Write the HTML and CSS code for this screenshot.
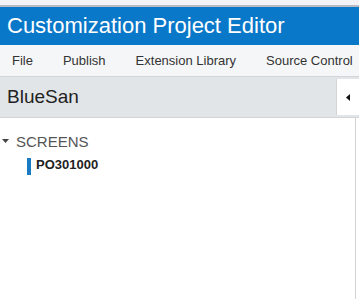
FILE: index.html
```html
<!DOCTYPE html>
<html lang="en">
<head>
    <meta charset="UTF-8">
    <meta name="viewport" content="width=device-width, initial-scale=1.0">
    <title>Customization Project Editor</title>
    <link rel="stylesheet" href="styles.css">
</head>
<body>
    <div class="topstrip"></div>

    <header class="header">
        <h1>Customization Project Editor</h1>
    </header>

    <nav class="menu">
        <a href="#" class="menu-item">File</a>
        <a href="#" class="menu-item">Publish</a>
        <a href="#" class="menu-item">Extension Library</a>
        <a href="#" class="menu-item">Source Control</a>
    </nav>

    <div class="project-bar">
        <span class="project-name">BlueSan</span>
        <button class="collapse-btn" aria-label="Collapse">
            <svg width="4" height="7" viewBox="0 0 4 7"><path d="M4 0 L0 3.5 L4 7 Z" fill="#111"/></svg>
        </button>
    </div>

    <main class="tree">
        <div class="tree-group">
            <svg class="caret" width="7" height="4" viewBox="0 0 7 4"><path d="M0 0 L7 0 L3.5 4 Z" fill="#444"/></svg>
            <span class="group-label">SCREENS</span>
        </div>
        <div class="tree-item">
            <span class="item-marker"></span>
            <span class="item-label">PO301000</span>
        </div>
    </main>
</body>
</html>
```

FILE: styles.css
```css
:root {
    --blue: #0a78c9;
    --menu-bg: #f5f6f7;
    --bar-bg: #e2e5e8;
    --line: #d2d4d7;
    --text: #333333;
}

* {
    margin: 0;
    padding: 0;
    box-sizing: border-box;
}

body {
    font-family: "Liberation Sans", Arial, sans-serif;
    background: #ffffff;
    color: var(--text);
    height: 299px;
    overflow: hidden;
    display: flex;
    flex-direction: column;
}

.topstrip {
    height: 7px;
    background: #f2f3f7;
    border-bottom: 2px solid #b9bcc2;
}

.header {
    height: 38px;
    background: var(--blue);
    display: flex;
    align-items: center;
    padding-left: 7px;
}

.header h1 {
    color: #ffffff;
    font-size: 22px;
    font-weight: normal;
    white-space: nowrap;
}

.menu {
    height: 32px;
    background: var(--menu-bg);
    border-bottom: 1px solid var(--line);
    display: flex;
    align-items: center;
    gap: 30px;
    padding-left: 12px;
    white-space: nowrap;
}

.menu-item {
    color: #333;
    text-decoration: none;
    font-size: 13px;
}

.project-bar {
    height: 41px;
    background: var(--bar-bg);
    border-bottom: 1px solid var(--line);
    display: flex;
    align-items: center;
    justify-content: space-between;
    padding-left: 7px;
}

.project-name {
    font-size: 19px;
    color: #222;
}

.collapse-btn {
    width: 23px;
    height: 36px;
    background: #ffffff;
    border: none;
    border-left: 1px solid var(--line);
    display: flex;
    align-items: center;
    justify-content: center;
}

.tree {
    flex: 1;
    border-right: 1px solid var(--line);
    margin-right: 3px;
    padding-top: 14px;
}

.tree-group {
    display: flex;
    align-items: center;
    gap: 7px;
    padding-left: 2px;
    height: 18px;
}

.group-label {
    font-size: 15px;
    color: #555;
}

.tree-item {
    display: flex;
    align-items: flex-start;
    gap: 5px;
    padding-left: 27px;
    margin-top: 8px;
}

.item-marker {
    width: 4px;
    height: 17px;
    background: #1a7bc4;
}

.item-label {
    font-size: 13px;
    line-height: 13px;
    font-weight: bold;
    color: #222;
}
```
